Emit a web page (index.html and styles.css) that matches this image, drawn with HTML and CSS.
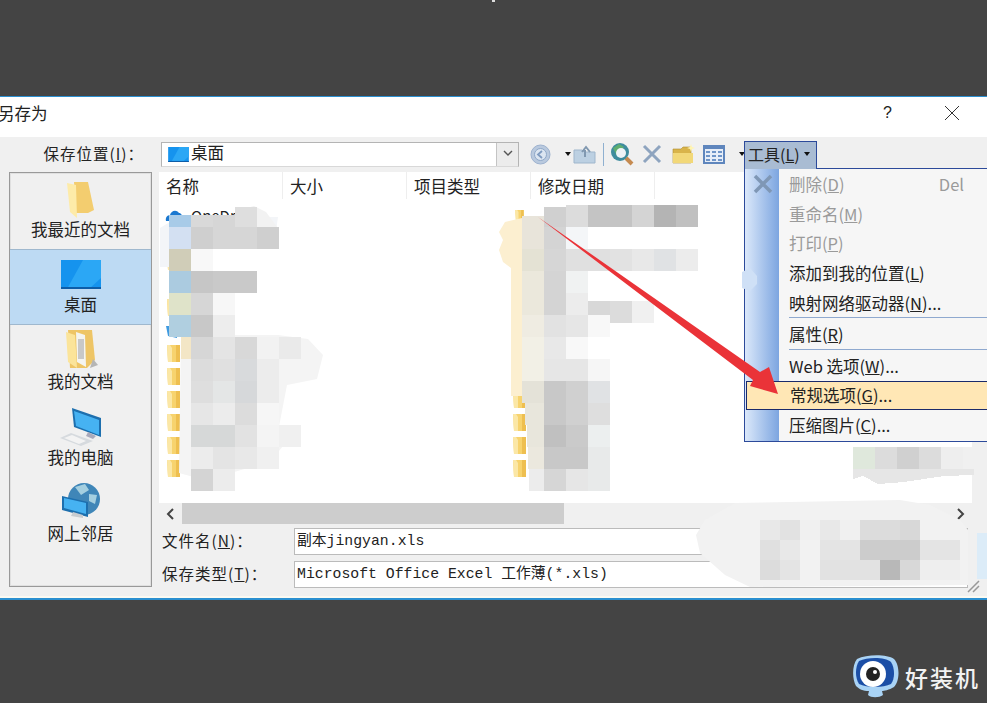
FILE: index.html
```html
<!DOCTYPE html>
<html lang="zh">
<head>
  <meta charset="UTF-8">
  <title>另存为</title>
  <link rel="stylesheet" href="styles.css">
</head>
<body>
  <svg class="defs" width="0" height="0">
    <symbol id="folder" viewBox="0 0 13 17">
      <path d="M0 0h13v14l-2 3H1z" fill="#f7d36e"/>
      <path d="M0 0h3l2 3v14H1z" fill="#fbe7a6"/>
      <path d="M9 0h4v17H9z" fill="#eebf50"/>
    </symbol>
    <symbol id="screen" viewBox="0 0 40 29">
      <rect width="40" height="29" fill="#1593ee"/>
      <path d="M22 0h18v18L28 29H6z" fill="#2ba7f5"/>
      <rect y="27" width="40" height="2" fill="#0d5da8"/>
    </symbol>
  </svg>

  <div class="backdrop"></div>

  <div class="dialog">
    <div class="titlebar">
      <span class="title">另存为</span>
      <span class="help">?</span>
      <svg class="close" width="16" height="16" viewBox="0 0 16 16"><path d="M1 1l14 14M15 1L1 15" stroke="#333" fill="none"/></svg>
    </div>

    <div class="toolbar">
      <label class="field-label">保存位置(<u>I</u>)：</label>
      <div class="combo">
        <svg width="21" height="15"><use href="#screen"/></svg>
        <span class="combo-text">桌面</span>
        <span class="combo-btn">
          <svg width="12" height="8" viewBox="0 0 12 8"><path d="M2 1l4 4 4-4" stroke="#555" stroke-width="1.4" fill="none"/></svg>
        </span>
      </div>
      <svg class="tool tool-back" width="21" height="21" viewBox="0 0 21 21">
        <circle cx="10.5" cy="10.5" r="9.5" fill="#b9c9de" stroke="#9db2cf"/>
        <circle cx="10.5" cy="10.5" r="6" fill="#dbe5f1" stroke="#8fa8c8"/>
        <path d="M12 7l-4 3.500 4 3.500" stroke="#7f9bc0" stroke-width="1.800" fill="none"/>
      </svg>
      <span class="drop-mark tool-mark1"></span>
      <svg class="tool tool-up" width="23" height="19" viewBox="0 0 23 19">
        <path d="M1 5h8l2 2h11v11H1z" fill="#bcd0e2" stroke="#9fb6cc"/>
        <path d="M12 12V5M9 7l4-5 4 5" stroke="#8098b0" stroke-width="2" fill="none"/>
      </svg>
      <span class="tool-sep"></span>
      <svg class="tool tool-search" width="25" height="24" viewBox="0 0 25 24">
        <circle cx="10" cy="10" r="9" fill="#3e8c9e"/>
        <path d="M3 6l6-4 5 3-4 4-3 5z" fill="#5fae70"/>
        <circle cx="11" cy="11" r="5" fill="#eef3f6"/>
        <path d="M16 16l6 6" stroke="#c58a50" stroke-width="4"/>
      </svg>
      <svg class="tool tool-del" width="20" height="20" viewBox="0 0 20 20"><path d="M2 2l16 16M18 2L2 18" stroke="#8ea4bf" stroke-width="3"/></svg>
      <svg class="tool tool-new" width="23" height="20" viewBox="0 0 23 20">
        <path d="M1 5h8l2-2h8v16H1z" fill="#d9b44a" stroke="#b08f30" stroke-width=".6"/>
        <path d="M1 9h20v10H1z" fill="#f2d878"/>
        <path d="M19 0l1 3 3 1-3 1-1 3-1-3-3-1 3-1z" fill="#fff4b0"/>
      </svg>
      <svg class="tool tool-view" width="22" height="19" viewBox="0 0 22 19">
        <rect width="22" height="19" fill="#5f86bd"/>
        <rect x="2" y="4" width="18" height="13" fill="#e7eef8"/>
        <path d="M3 6h4v2H3zm6 0h4v2H9zm6 0h4v2h-4zM3 10h4v2H3zm6 0h4v2H9zm6 0h4v2h-4zM3 14h4v2H3zm6 0h4v2H9zm6 0h4v2h-4z" fill="#6f95c8"/>
      </svg>
      <span class="drop-mark tool-mark2"></span>
    </div>

    <div class="main">
      <nav class="places">
        <a class="place">
          <svg width="28" height="37" viewBox="0 0 28 37">
            <path d="M7 1h14l6 28-6 3H9z" fill="#f3cd6f"/>
            <path d="M0 2l9 2 1 33-7-6z" fill="#fdeba9"/>
          </svg>
          <span>我最近的文档</span>
        </a>
        <a class="place is-active">
          <svg width="40" height="29"><use href="#screen"/></svg>
          <span>桌面</span>
        </a>
        <a class="place">
          <svg width="36" height="41" viewBox="0 0 36 41">
            <path d="M5 1h24l3 30-8 8H7z" fill="#eec566"/>
            <path d="M13 3l9 3 1 32-9-5z" fill="#f4f4f0"/>
            <path d="M15 10h6v20h-6z" fill="#c8c8c8"/>
            <path d="M3 3l9 3 2 33-9-6z" fill="#fbe49a"/>
            <path d="M30 30l5 6-8 3z" fill="#b5b5b5"/>
          </svg>
          <span>我的文档</span>
        </a>
        <a class="place">
          <svg width="42" height="38" viewBox="0 0 42 38">
            <path d="M12 0l29 10v19L14 19z" fill="#1d6fae"/>
            <path d="M14 3l25 9v15L16 18z" fill="#46b2f2"/>
            <path d="M28 24l8 4-3 3-7-3z" fill="#aab"/>
            <path d="M0 30l11-5 22 8-12 5z" fill="#d6dade"/>
            <path d="M4 30l8-3 14 6-7 3z" fill="#f3f3f3"/>
          </svg>
          <span>我的电脑</span>
        </a>
        <a class="place">
          <svg width="40" height="40" viewBox="0 0 40 40">
            <circle cx="23" cy="17" r="16" fill="#3f86b8"/>
            <path d="M14 5l10-3 4 6-8 5zM28 12l8 1-2 9-6-3z" fill="#a4cfe0"/>
            <path d="M1 14l26 6v15L1 28z" fill="#1d6fae"/>
            <path d="M3 16l22 5v11L3 26z" fill="#46b2f2"/>
            <path d="M12 30l10 3v3l-12-2z" fill="#c8ccd0"/>
          </svg>
          <span>网上邻居</span>
        </a>
      </nav>

      <div class="browser">
        <div class="file-list">
          <div class="file-head">
            <span>名称</span>
            <span>大小</span>
            <span>项目类型</span>
            <span>修改日期</span>
          </div>
          <div class="file-row">
            <div class="cell">
              <svg class="file-icon" width="18" height="14" viewBox="0 0 18 14"><path d="M1 12c-1-4 2-6 4-6 1-4 6-6 9-2 2 0 4 2 3 8z" fill="#1a78d0"/></svg>
              <span class="name">OneDrive</span>
            </div>
            <div class="cell"><svg width="13" height="11"><use href="#folder"/></svg></div>
          </div>
          <div class="file-row">
            <div class="cell">
              <svg class="file-icon" width="18" height="14" viewBox="0 0 18 14"><path d="M5 12a4 4 0 0 1 0-8h8a4 4 0 0 1 0 8z" stroke="#3a82e6" stroke-width="2" fill="none"/></svg>
            </div>
          </div>
          <div class="file-row"><div class="cell"><svg width="13" height="17"><use href="#folder"/></svg></div></div>
          <div class="file-row"></div>
          <div class="file-row"><div class="cell"><svg width="13" height="17"><use href="#folder"/></svg></div></div>
          <div class="file-row"><div class="cell"><svg class="file-icon" width="13" height="16" viewBox="0 0 13 16"><path d="M1 3h5l2 2h4v10l-9-2z" fill="#3f9ae0"/></svg></div></div>
          <div class="file-row"><div class="cell"><svg width="13" height="17"><use href="#folder"/></svg></div></div>
          <div class="file-row"><div class="cell"><svg width="13" height="17"><use href="#folder"/></svg></div></div>
          <div class="file-row"><div class="cell"><svg width="13" height="17"><use href="#folder"/></svg></div><div class="cell"><svg width="13" height="17"><use href="#folder"/></svg></div></div>
          <div class="file-row"><div class="cell"><svg width="13" height="17"><use href="#folder"/></svg></div><div class="cell"><svg width="13" height="17"><use href="#folder"/></svg></div></div>
          <div class="file-row"><div class="cell"><svg width="13" height="17"><use href="#folder"/></svg></div><div class="cell"><svg width="13" height="17"><use href="#folder"/></svg></div></div>
          <div class="file-row"><div class="cell"><svg width="13" height="17"><use href="#folder"/></svg></div><div class="cell"><svg width="13" height="17"><use href="#folder"/></svg></div></div>
        </div>

        <div class="hscroll">
          <svg width="9" height="12" viewBox="0 0 9 12"><path d="M7 1L2 6l5 5" stroke="#444" stroke-width="2" fill="none"/></svg>
          <div class="hscroll-track"><div class="hscroll-thumb"></div></div>
          <svg width="9" height="12" viewBox="0 0 9 12"><path d="M2 1l5 5-5 5" stroke="#444" stroke-width="2" fill="none"/></svg>
        </div>

        <div class="form-row">
          <label class="form-label">文件名(<u>N</u>)：</label>
          <div class="text-box">副本jingyan.xls</div>
        </div>
        <div class="form-row">
          <label class="form-label">保存类型(<u>T</u>)：</label>
          <div class="text-box">Microsoft Office Excel 工作薄(*.xls)</div>
        </div>
      </div>
    </div>

    <svg class="grip" width="14" height="14" viewBox="0 0 14 14"><path d="M2 13L13 2M7 13l6-6" stroke="#999" stroke-width="1.500"/></svg>
  </div>

  <div class="footer">
    <svg class="logo" width="46" height="43" viewBox="0 0 46 43">
      <path d="M4 4C14-1 34-1 41 4c6 6 6 22 0 28-5 3-10 4-12 4l1 4c-4 3-12 3-15 0l1-4C10 36 6 34 3 31-1 24-1 10 4 4z" fill="#a9d3f5"/>
      <path d="M6 6C15 2 32 2 38 7c4 6 4 17 0 22-8 4-24 4-32 0C2 23 2 12 6 6z" fill="#1b4ea6"/>
      <circle cx="20" cy="19" r="13" fill="#fff"/>
      <circle cx="20" cy="19" r="7" fill="#222"/>
      <circle cx="22" cy="17" r="2" fill="#fff"/>
    </svg>
    <span class="brand">好装机</span>
  </div>

  <!-- 工具 menu -->
  <div class="tools-menu">
    <div class="tools-btn">
      <span>工具(<u>L</u>)</span>
      <span class="drop-mark"></span>
    </div>
    <div class="menu">
      <svg class="menu-x" width="20" height="20" viewBox="0 0 20 20"><path d="M2 2l16 16M18 2L2 18" stroke="#7f97b5" stroke-width="3.500"/></svg>
      <div class="menu-item is-disabled"><span>删除(<u>D</u>)</span><span class="shortcut">Del</span></div>
      <div class="menu-item is-disabled"><span>重命名(<u>M</u>)</span></div>
      <div class="menu-item is-disabled"><span>打印(<u>P</u>)</span></div>
      <div class="menu-item"><span>添加到我的位置(<u>L</u>)</span></div>
      <div class="menu-item"><span>映射网络驱动器(<u>N</u>)...</span></div>
      <div class="menu-sep"></div>
      <div class="menu-item"><span>属性(<u>R</u>)</span></div>
      <div class="menu-sep"></div>
      <div class="menu-item"><span>Web 选项(<u>W</u>)...</span></div>
      <div class="menu-item is-hover"><span>常规选项(<u>G</u>)...</span></div>
      <div class="menu-item"><span>压缩图片(<u>C</u>)...</span></div>
    </div>
  </div>

  <!-- mosaic and arrow drawn over the screenshot -->
  <svg class="overlay" width="987" height="703" viewBox="0 0 987 703">
    <rect x="492" y="0" width="3" height="2" fill="#ddd"/>
    <path d="M160 228l18-11h100l-4 28h-80l-10 22h-24z" fill="#f3f5f8"/>
    <path d="M240 210l14-4 12 6 12 16h-38z" fill="#f2f2f2"/>
    <path d="M181 335h97l30 4 15 16-6 24-30 6-10 52 10 4-16 20-40 12-30 6-22-6z" fill="#f4f4f4"/>
    <path d="M522 218l-17 4-6 10 4 8-4 10 4 12 8 6v128h11z" fill="#fcefd0"/>
    <path d="M735 503l165-3 30 5 30 15 8 10v55l-218 2-25-12-25-22-4-18 9-15z" fill="#f2f2f2"/>
    <rect x="977" y="533" width="10" height="46" fill="#dcecf8"/>
    <path d="M742 272l8-4 7 8v8l-7 7-8-3z" fill="#cfe0f6"/>

    <g class="mosaic">
      <rect class="px" x="169" y="215" height="12" fill="#a8cbe8"/><rect class="px" x="191" y="215" height="12" fill="#d9d9d9"/><rect class="px" x="213" y="215" height="12" fill="#d6d6d6"/><rect class="px" x="235" y="207" height="20" fill="#dedede"/>
      <rect class="px" x="169" y="227" fill="#d3e0f2"/><rect class="px" x="191" y="227" fill="#cfcfcf"/><rect class="px" x="213" y="227" fill="#d6d6d6"/><rect class="px" x="235" y="227" fill="#d6d6d6"/><rect class="px" x="257" y="227" width="16" fill="#cfcfcf"/>
      <rect class="px" x="169" y="249" fill="#d0cdb8"/><rect class="px" x="191" y="249" fill="#f8f8f8"/>
      <rect class="px" x="169" y="271" fill="#abcbe0"/><rect class="px" x="191" y="271" fill="#c6c6c6"/><rect class="px" x="213" y="271" fill="#c9c9c9"/><rect class="px" x="235" y="271" fill="#c9c9c9"/>
      <rect class="px" x="169" y="293" fill="#dfe3c9"/><rect class="px" x="191" y="293" fill="#d6d6d6"/><rect class="px" x="213" y="293" fill="#f7f7f7"/>
      <rect class="px" x="169" y="315" fill="#b0cfe0"/><rect class="px" x="191" y="315" fill="#c8c8c8"/><rect class="px" x="213" y="315" fill="#ededed"/>
      <rect class="px" x="181" y="337" width="10" height="132" fill="#f3e6c6"/>
      <rect class="px" x="191" y="337" fill="#d6d6d6"/><rect class="px" x="213" y="337" fill="#e4e4e4"/><rect class="px" x="235" y="337" fill="#d8d8d8"/><rect class="px" x="257" y="337" fill="#f2f2f2"/><rect class="px" x="279" y="337" fill="#eaeaea"/>
      <rect class="px" x="191" y="359" fill="#dcdcdc"/><rect class="px" x="213" y="359" fill="#e0e0e0"/><rect class="px" x="235" y="359" fill="#d8dadc"/><rect class="px" x="257" y="359" fill="#ececec"/><rect class="px" x="279" y="359" fill="#f4f4f4"/>
      <rect class="px" x="191" y="381" fill="#dedede"/><rect class="px" x="213" y="381" fill="#e4e6e6"/><rect class="px" x="235" y="381" fill="#d6d8da"/><rect class="px" x="257" y="381" fill="#ececec"/>
      <rect class="px" x="191" y="403" fill="#e6e6e6"/><rect class="px" x="213" y="403" fill="#ececec"/><rect class="px" x="235" y="403" fill="#dcdcdc"/><rect class="px" x="257" y="403" fill="#f6f6f6"/>
      <rect class="px" x="191" y="425" fill="#d6d8d8"/><rect class="px" x="213" y="425" fill="#d6d8d8"/><rect class="px" x="235" y="425" fill="#e2e2e2"/><rect class="px" x="257" y="425" fill="#f4f4f4"/><rect class="px" x="279" y="425" fill="#f0f0f0"/>
      <rect class="px" x="191" y="447" fill="#ececec"/><rect class="px" x="213" y="447" fill="#e4e4e4"/><rect class="px" x="235" y="447" fill="#e8e8e8"/><rect class="px" x="257" y="447" fill="#f0f0f0"/>
      <rect class="px" x="191" y="469" height="16" fill="#d4d4d4"/><rect class="px" x="213" y="469" height="18" fill="#ececec"/>

      <rect class="px" x="522" y="216" height="11" fill="#e8e4da"/><rect class="px" x="544" y="207" height="20" fill="#d0d0d0"/><rect class="px" x="566" y="205" fill="#dcdcdc"/><rect class="px" x="588" y="205" fill="#c4c4c4"/><rect class="px" x="610" y="205" fill="#c4c4c4"/><rect class="px" x="632" y="205" fill="#d4d4d4"/><rect class="px" x="654" y="205" fill="#b4b4b4"/><rect class="px" x="676" y="205" fill="#c0c0c0"/>
      <rect class="px" x="522" y="227" fill="#e8e4da"/><rect class="px" x="544" y="227" fill="#d4d4d4"/><rect class="px" x="566" y="227" fill="#f4f6f8"/>
      <rect class="px" x="522" y="249" fill="#e4e2d4"/><rect class="px" x="544" y="249" fill="#d6d6d6"/><rect class="px" x="566" y="249" fill="#e0e0e0"/><rect class="px" x="588" y="249" fill="#e0e0e0"/><rect class="px" x="610" y="249" fill="#e2e2e2"/><rect class="px" x="632" y="249" fill="#e8e8e8"/><rect class="px" x="654" y="249" fill="#e0e2e4"/><rect class="px" x="676" y="249" fill="#ececec"/>
      <rect class="px" x="522" y="271" fill="#ebe8dc"/><rect class="px" x="544" y="271" fill="#d4d4d4"/><rect class="px" x="566" y="271" fill="#f0f2f2"/>
      <rect class="px" x="522" y="293" fill="#ebe8dc"/><rect class="px" x="544" y="293" fill="#d4d4d4"/><rect class="px" x="566" y="293" fill="#ececec"/><rect class="px" x="588" y="301" height="14" fill="#d8d8d8"/><rect class="px" x="610" y="301" height="14" fill="#dcdcdc"/><rect class="px" x="632" y="301" height="14" fill="#f0f0f0"/>
      <rect class="px" x="522" y="315" fill="#efece2"/><rect class="px" x="544" y="315" fill="#e2e2e2"/><rect class="px" x="566" y="315" fill="#e6e6e6"/><rect class="px" x="588" y="315" fill="#f8f8f8"/>
      <rect class="px" x="522" y="337" fill="#f2f0e6"/><rect class="px" x="544" y="337" fill="#e8e8e8"/><rect class="px" x="566" y="337" fill="#f8f8f8"/>
      <rect class="px" x="522" y="359" fill="#f2f0e6"/><rect class="px" x="544" y="359" fill="#e6e6e6"/><rect class="px" x="566" y="359" fill="#e6e6e6"/><rect class="px" x="588" y="359" fill="#f6f6f6"/>
      <rect class="px" x="522" y="381" fill="#e4e2d8"/><rect class="px" x="544" y="381" fill="#c8c8c8"/><rect class="px" x="566" y="381" fill="#d0d0d0"/><rect class="px" x="588" y="381" fill="#e0e2e4"/>
      <rect class="px" x="525" y="403" width="19" fill="#e8e6dc"/><rect class="px" x="544" y="403" fill="#c8c8c8"/><rect class="px" x="566" y="403" fill="#d0d0d0"/><rect class="px" x="588" y="403" width="18" fill="#dedede"/>
      <rect class="px" x="527" y="425" width="17" fill="#e8e6dc"/><rect class="px" x="544" y="425" fill="#c0c0c0"/><rect class="px" x="566" y="425" fill="#cacaca"/><rect class="px" x="588" y="425" width="16" fill="#ecefef"/>
      <rect class="px" x="528" y="447" width="16" fill="#ebe8de"/><rect class="px" x="544" y="447" fill="#c8c8c8"/><rect class="px" x="566" y="447" fill="#c8c8c8"/><rect class="px" x="588" y="447" fill="#e8eaea"/>
      <rect class="px" x="529" y="469" width="15" height="17" fill="#ececec"/><rect class="px" x="544" y="469" height="19" fill="#d6d6d6"/><rect class="px" x="566" y="469" height="17" fill="#e6e6e6"/><rect class="px" x="588" y="469" height="14" fill="#e8eaea"/>

      <rect class="px" x="853" y="447" fill="#dfe8dc"/><rect class="px" x="875" y="447" fill="#dcdcdc"/><rect class="px" x="897" y="447" fill="#d0d0d0"/><rect class="px" x="919" y="447" fill="#dcdcdc"/><rect class="px" x="941" y="447" fill="#eeeeee"/><rect class="px" x="963" y="447" width="14" fill="#f0f0f0"/>
      <path d="M853 469h121v6l-30 1-40 6-26 2-15-8-10 3z" fill="#e6e6e6"/>

      <rect class="cell20" x="760" y="520" fill="#e8e8e8"/><rect class="cell20" x="780" y="520" fill="#e2e2e2"/><rect class="cell20" x="800" y="520" fill="#f0f0f0"/><rect class="cell20" x="820" y="520" fill="#e8e8e8"/><rect class="cell20" x="840" y="520" fill="#f0f0f0"/><rect class="cell20" x="860" y="520" fill="#dcdcdc"/><rect class="cell20" x="880" y="520" fill="#dcdcdc"/><rect class="cell20" x="900" y="520" fill="#d8d8d8"/>
      <rect class="cell20" x="760" y="540" fill="#e0e0e0"/><rect class="cell20" x="780" y="540" fill="#e8e8e8"/><rect class="cell20" x="800" y="540" fill="#f2f2f2"/><rect class="cell20" x="820" y="540" fill="#e4e4e4"/><rect class="cell20" x="840" y="540" fill="#e4e4e4"/><rect class="cell20" x="860" y="540" fill="#cccccc"/><rect class="cell20" x="880" y="540" fill="#cccccc"/><rect class="cell20" x="900" y="540" fill="#cccccc"/><rect class="cell20" x="920" y="540" fill="#e4e4e4"/><rect class="cell20" x="940" y="540" fill="#e4e4e4"/>
      <rect class="cell20" x="760" y="560" fill="#dcdcdc"/><rect class="cell20" x="780" y="560" fill="#e4e4e4"/><rect class="cell20" x="800" y="560" fill="#f2f2f2"/><rect class="cell20" x="820" y="560" fill="#e2e2e2"/><rect class="cell20" x="840" y="560" fill="#e2e2e2"/><rect class="cell20" x="860" y="560" fill="#e2e2e2"/><rect class="cell20" x="880" y="560" fill="#b8b8b8"/><rect class="cell20" x="900" y="560" fill="#d8d8d8"/><rect class="cell20" x="920" y="560" fill="#eeeeee"/><rect class="cell20" x="940" y="560" fill="#eeeeee"/>
    </g>

    <polygon points="538,217 760,372 769,367 778,394 750,386 753,380" fill="#ea3338"/>
  </svg>
</body>
</html>
```

FILE: styles.css
```css
* {
  box-sizing: border-box;
}

html, body {
  margin: 0;
  height: 703px;
  overflow: hidden;
}

body {
  position: relative;
  background-color: #444444;
  color: #222222;
  font-family: "Noto Sans CJK SC", "Liberation Sans", sans-serif;
  font-size: 16.5px;
}

.defs {
  position: absolute;
}

.backdrop {
  height: 96px;
}

.dialog {
  position: relative;
  height: 504px;
  background-color: #f0f0f0;
  border-top: 1px solid #2b8fd0;
  border-bottom: 2px solid #2b8fd0;
  box-shadow: inset 0 -2px 0 #fbfaf2;
}

.titlebar {
  display: flex;
  align-items: center;
  height: 40px;
  padding-right: 27px;
  padding-bottom: 8px;
  background-color: #ffffff;
}

.title {
  margin-left: -2px;
}

.help {
  margin-left: auto;
  margin-right: 52px;
  font-family: "Liberation Sans", sans-serif;
  font-size: 16px;
}

.toolbar {
  display: flex;
  align-items: center;
  height: 34px;
}

.field-label {
  width: 144px;
  margin-right: 17px;
  padding-bottom: 3px;
  font-size: 15.5px;
  text-align: right;
  letter-spacing: 1px;
  white-space: nowrap;
}

.combo {
  display: flex;
  align-items: center;
  gap: 2px;
  width: 358px;
  height: 25px;
  padding-left: 6px;
  background-color: #ffffff;
  border: 1px solid #b4b4b4;
  border-bottom-color: #d8d8d8;
}

.combo-text {
  padding-bottom: 4px;
}

.combo-btn {
  display: flex;
  align-items: center;
  justify-content: center;
  width: 22px;
  height: 23px;
  margin-left: auto;
  background-color: #ececec;
  border-left: 1px solid #c4c4c4;
}

.tool {
  flex: none;
}

.tool-back {
  margin-left: 11px;
}

.tool-mark1 {
  margin-left: 14px;
  margin-right: 2px;
}

.tool-sep {
  width: 1px;
  height: 23px;
  margin: 0 6px 0 7px;
  background-color: #8fb0d0;
}

.tool-del {
  margin-left: 7px;
}

.tool-new {
  margin-left: 10px;
}

.tool-view {
  margin-left: 8px;
}

.tool-mark2 {
  margin-left: 14px;
}

.drop-mark {
  flex: none;
  width: 0;
  height: 0;
  border-top: 4px solid #111111;
  border-left: 3px solid transparent;
  border-right: 3px solid transparent;
}

.main {
  display: flex;
  gap: 7px;
  padding-left: 9px;
}

.places {
  display: flex;
  flex-direction: column;
  flex: none;
  width: 143px;
  height: 415px;
  margin-top: 1px;
  background-color: #f0f0f0;
  border: 1px solid #999999;
  box-shadow: inset 0 0 0 1px #e0e0e0;
}

.place {
  display: flex;
  flex-direction: column;
  align-items: center;
  justify-content: flex-end;
  flex: none;
  height: 76px;
  padding-bottom: 9px;
  line-height: 22px;
}

.place.is-active {
  gap: 4px;
  background-color: #bddaf3;
  border-top: 1px solid #9fb8ce;
  border-bottom: 1px solid #9fb8ce;
}

.browser {
  flex: none;
  width: 813px;
}

.file-list {
  height: 332px;
  background-color: #ffffff;
  overflow: hidden;
}

.file-head {
  display: flex;
  height: 33px;
  padding-bottom: 5px;
  background-color: #ffffff;
  border-top: 1px solid #f0f0f0;
}

.file-head span {
  display: flex;
  align-items: center;
  width: 124px;
  padding-left: 7px;
  border-right: 1px solid #eeeeee;
}

.file-row {
  display: grid;
  grid-template-columns: 354px 1fr;
  height: 23px;
  align-items: center;
}

.cell {
  display: flex;
  align-items: center;
  gap: 8px;
  padding-left: 8px;
}

.cell + .cell {
  padding-left: 0;
}

.file-icon {
  margin-left: -2px;
}

.name {
  font-size: 15px;
  line-height: 20px;
}

.hscroll {
  display: flex;
  align-items: center;
  gap: 7px;
  height: 21px;
  padding: 0 7px;
  background-color: #f0f0f0;
}

.hscroll-track {
  flex: 1;
  height: 100%;
}

.hscroll-thumb {
  width: 382px;
  height: 100%;
  background-color: #cdcdcd;
}

.form-row {
  display: flex;
  align-items: center;
  height: 27px;
  margin-top: 4px;
}

.form-row + .form-row {
  margin-top: 6px;
}

.form-label {
  flex: none;
  width: 135px;
  padding-left: 3px;
  padding-bottom: 4px;
  font-size: 15.5px;
  letter-spacing: 1px;
  white-space: nowrap;
}

.text-box {
  width: 674px;
  height: 27px;
  padding-left: 2px;
  background-color: #ffffff;
  border: 1px solid #bbbbbb;
  font-family: "Liberation Mono", "Noto Sans CJK SC", monospace;
  font-size: 14.8px;
  line-height: 25px;
  white-space: nowrap;
}

.grip {
  position: absolute;
  right: 7px;
  bottom: 5px;
}

.footer {
  display: flex;
  align-items: center;
  justify-content: flex-end;
  gap: 6px;
  height: 103px;
  padding: 50px 7px 0 0;
}

.brand {
  color: #f2f2f2;
  font-size: 23px;
  font-weight: 500;
  letter-spacing: 2px;
}

.tools-menu {
  position: absolute;
  left: 744px;
  top: 141px;
  width: 243px;
}

.tools-btn {
  display: flex;
  align-items: center;
  gap: 4px;
  position: relative;
  z-index: 1;
  width: 73px;
  height: 28px;
  padding-left: 3px;
  padding-bottom: 3px;
  background-color: #a9bcd3;
  border: 1px solid #2c4a9a;
  border-bottom: none;
  font-size: 16px;
}

.menu {
  position: relative;
  height: 274px;
  margin-top: -1px;
  background: linear-gradient(to right, #dbe8fa, #7ca5e0 34px, #f6f6f6 34px);
  border: 1px solid #2c4a9a;
  border-right: none;
}

.menu-x {
  position: absolute;
  left: 8px;
  top: 5px;
}

.menu-item {
  display: flex;
  justify-content: space-between;
  align-items: center;
  height: 29.7px;
  padding-left: 44px;
  padding-right: 23px;
}

.menu-item.is-disabled {
  color: #9a9a9a;
}

.menu-item.is-hover {
  height: 29px;
  margin-left: 1px;
  padding-left: 43px;
  background-color: #ffe7b5;
  border: 1px solid #1a2a6a;
  border-right: none;
}

.menu-sep {
  height: 1px;
  margin: 0 0 1px 44px;
  background-color: #8fa9cf;
}

.overlay {
  position: absolute;
  left: 0;
  top: 0;
  pointer-events: none;
}

.mosaic {
  shape-rendering: crispEdges;
}

.px {
  width: 22px;
  height: 22px;
}

.cell20 {
  width: 20px;
  height: 20px;
}
```
